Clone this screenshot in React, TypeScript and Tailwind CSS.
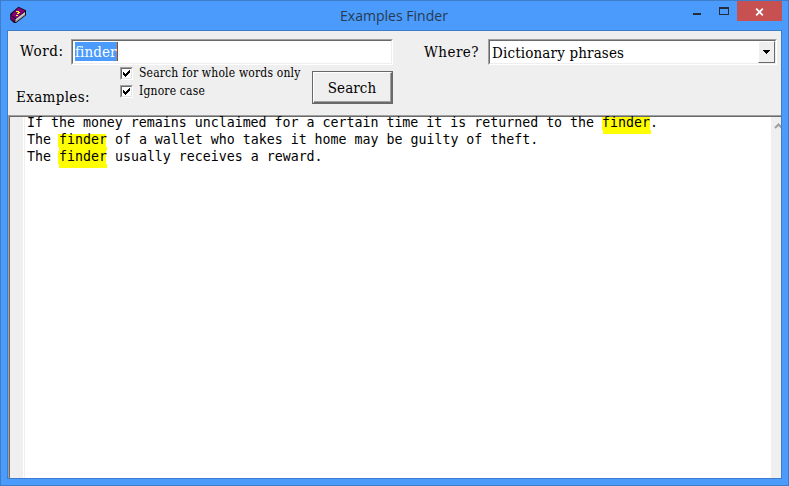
import React from "react";

const serif = "font-['DejaVu_Serif_Condensed','DejaVu_Serif',serif] [font-stretch:condensed] whitespace-nowrap text-black";

function BookIcon() {
  return (
    <svg width="18" height="18" viewBox="0 0 18 18" className="absolute left-[9px] top-[6px]">
      <path d="M9.5 .8L17 4.3v5L7 17H5L1.2 13.5V7.8Z" fill="#180818" />
      <path d="M9.5 1.6L16 4.8 7.5 12.5 2 9Z" fill="#84007b" />
      <path d="M6.5 13.2L16 6v3L6.5 16.2Z" fill="#d0d0d0" />
      <path d="M7 15l9-6.5" stroke="#777" strokeWidth=".6" />
      <path d="M1.8 9.5l4 3.2v3L1.8 13Z" fill="#7a0072" />
      <path d="M7 5h3v1h1v1h-1v1H8V7h1V6H7ZM7 9h2v1H7Z" fill="#ffff20" shapeRendering="crispEdges" />
    </svg>
  );
}

function Check({ label }: { label: string }) {
  return (
    <div className="flex h-[18px] items-start">
      <div className="mt-px h-[13px] w-[13px] border border-b-white border-r-white border-l-[#a0a0a0] border-t-[#a0a0a0]">
        <div className="h-[11px] w-[11px] border border-b-[#e3e3e3] border-r-[#e3e3e3] border-l-[#696969] border-t-[#696969] bg-white">
          <svg width="9" height="9" viewBox="0 0 9 9" className="block" shapeRendering="crispEdges">
            <path d="M1 3h1v1h1v1h1V4h1V3h1V2h1V1h1v3H7v1H6v1H5v1H4v1H3V7H2V6H1Z" fill="#000" />
          </svg>
        </div>
      </div>
      <span className={`${serif} ml-[6px] text-[12px] leading-[15px] tracking-[0.18px]`}>{label}</span>
    </div>
  );
}

function Mark({ first = false }: { first?: boolean }) {
  return (
    <span className={`relative inline-block w-[48px] align-top ${first ? "h-[14px]" : "h-[17px]"}`}>
      <span className={`absolute h-[13px] w-[48px] bg-[#ffff00] ${first ? "left-0 top-0" : "-left-px top-[3px]"}`} />
      <span className={`absolute h-[4px] w-[48px] bg-[#ffff00] ${first ? "left-px top-[13px]" : "left-0 top-[16px]"}`} />
      <span className="relative">finder</span>
    </span>
  );
}

export default function App() {
  return (
    <div className="flex h-[486px] w-[789px] flex-col overflow-hidden border border-[#3e7dca] bg-[#4a9bfb]">
      <header className="relative h-[29px] shrink-0">
        <div className="absolute -left-px -top-px h-[30px] w-[789px]">
          <div className="absolute left-0 top-0 h-px w-full bg-[#3e7dca]" />
          <BookIcon />
          <div className="absolute left-[340px] top-[6px] whitespace-nowrap font-['Open_Sans',sans-serif] text-[14px] leading-[20px] tracking-[0.02px] text-[#273a52]">Examples Finder</div>
          <div className="absolute left-[693px] top-[13px] h-[2px] w-[8px] bg-[#252c37]" />
          <div className="absolute left-[719px] top-[7px] h-[8px] w-[10px] border border-t-2 border-[#252c37]" />
          <div className="absolute left-[737px] top-px flex h-[20px] w-[45px] items-center justify-center bg-[#c75050]">
            <svg width="9" height="8" viewBox="0 0 9 8" className="mt-[2px]">
              <path d="M1.2 .7L7.8 7.3M7.8 .7L1.2 7.3" stroke="#fff" strokeWidth="1.8" />
            </svg>
          </div>
        </div>
      </header>
      <main className="ml-[6px] flex h-[449px] w-[775px] shrink-0 flex-col border border-[#3e7dca] bg-[#efefef]">
        <section className="flex h-[84px] shrink-0">
          <div className="w-[63px] shrink-0">
            <div className={`${serif} ml-[12px] mt-[10px] text-[15px] leading-[20px] tracking-[0.6px]`}>Word:</div>
            <div className={`${serif} ml-[8px] mt-[26px] text-[15px] leading-[20px] tracking-[0.35px]`}>Examples:</div>
          </div>
          <div className="w-[322px] shrink-0 pt-[8px]">
            <div className="h-[26px] border border-b-white border-r-white border-l-[#a0a0a0] border-t-[#a0a0a0]">
              <div className="flex h-[24px] border border-b-[#eeeeee] border-r-[#eeeeee] border-l-[#696969] border-t-[#696969] bg-white pl-[2px] pt-px">
                <span className="h-[19px] w-[43px] border-r border-[#a84c00] bg-[#4a9bfb] font-['DejaVu_Serif_Condensed','DejaVu_Serif',serif] text-[15px] leading-[20px] tracking-[0.1px] text-white [font-stretch:condensed]">finder</span>
              </div>
            </div>
            <div className="flex">
              <div className="ml-[49px] w-[192px] pt-px">
                <Check label="Search for whole words only" />
                <Check label="Ignore case" />
              </div>
              <button className="mt-[6px] h-[33px] w-[81px] shrink-0 border border-[#696969]">
                <span className={`${serif} flex h-[31px] items-center justify-center border border-b-[#696969] border-r-[#696969] border-l-white border-t-white text-[15px] leading-[20px] tracking-[0.1px]`}>
                  <span className="flex h-full w-full items-center justify-center border-b border-r border-[#a0a0a0] pt-px">Search</span>
                </span>
              </button>
            </div>
          </div>
          <div className={`${serif} ml-[31px] mt-[11px] w-[64px] shrink-0 text-[15px] leading-[20px] tracking-[0.45px]`}>Where?</div>
          <div className="mt-[8px] h-[26px] w-[289px] shrink-0 border border-b-white border-r-white border-l-[#a0a0a0] border-t-[#a0a0a0]">
            <div className="flex h-[24px] justify-between border border-b-[#eeeeee] border-r-[#eeeeee] border-l-[#696969] border-t-[#696969] bg-white">
              <span className={`${serif} pl-[2px] pt-[2px] text-[15px] leading-[20px] tracking-[0.16px]`}>Dictionary phrases</span>
              <span className="flex h-[22px] w-[17px] items-center justify-center border border-b-[#696969] border-r-[#696969] border-l-white border-t-white bg-[#efefef]">
                <svg width="7" height="4" shapeRendering="crispEdges"><path d="M0 0h7v1H6v1H5v1H4v1H3V3H2V2H1V1H0Z" /></svg>
              </span>
            </div>
          </div>
        </section>
        <section className="flex min-h-0 flex-1 border-l border-t border-[#a0a0a0]">
          <div className="flex flex-1 border-l border-t border-[#696969] bg-white">
            <div className="w-[13px] shrink-0 bg-[#efefef]" />
            <div className="ml-px w-px shrink-0 bg-[#efefef]" />
            <div className="flex-1 pl-[2px] font-['DejaVu_Sans_Mono',monospace] text-[13.27px] leading-[17px] text-black">
              <div className="whitespace-pre">
                <div className="h-[14px] leading-[11px]">If the money remains unclaimed for a certain time it is returned to the <Mark first />.</div>
                <div className="h-[17px]">The <Mark /> of a wallet who takes it home may be guilty of theft.</div>
                <div className="h-[17px]">The <Mark /> usually receives a reward.</div>
              </div>
            </div>
            <div className="w-[10px] shrink-0 overflow-hidden bg-[#efefef]">
              <svg width="10" height="14" viewBox="0 0 10 14"><path d="M4 11L7.5 7.5L11 11" fill="none" stroke="#a0a0a0" strokeWidth="2" /></svg>
            </div>
          </div>
        </section>
      </main>
    </div>
  );
}
